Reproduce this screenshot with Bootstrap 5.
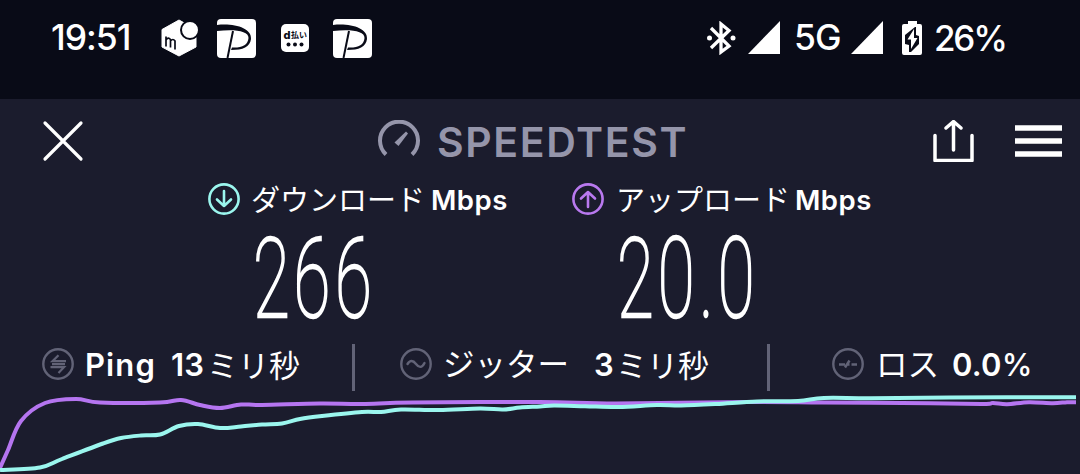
<!DOCTYPE html>
<html lang="ja">
<head>
    <meta charset="UTF-8" />
    <meta name="viewport" content="width=device-width, initial-scale=1" />
    <title>Speedtest</title>
    <link href="https://cdn.jsdelivr.net/npm/bootstrap@5.3.2/dist/css/bootstrap.min.css" rel="stylesheet" />
    <style>
        body { background: #1b1c2d; color: #fff; font-family: Inter, "Noto Sans CJK JP", sans-serif; width: 1080px; height: 474px; overflow: hidden; }
        svg { display: block; flex: none; }
        .line { display: grid; white-space: nowrap; }
        .line > * { min-width: 0; line-height: 1; }
        .status-bar { height: 99px; padding-bottom: 23px; background: #090b17; grid-template-columns: 51px 110px 56px 63px 53px 374px 41px 46px 57px 51px 32px 1fr; }
        .status-text { font-size: 35.5px; font-weight: 500; letter-spacing: -1px; }
        #charge { font-size: 35px; letter-spacing: -2.2px; }
        .top-bar { height: 84px; grid-template-columns: 42px 335px 60px 495px 82px 1fr; }
        .brand { font-size: 41px; font-weight: 600; color: #9595aa; letter-spacing: 1.6px; padding-top: 3px; }
        .label-line { height: 32px; grid-template-columns: 208px 43px 180px 141px 44px 179px 1fr; }
        .jp { font-family: "Noto Sans CJK JP", sans-serif; font-size: 29px; }
        .label-line .jp { margin-top: -2px; }
        .unit { font-size: 27.5px; font-weight: 600; letter-spacing: .5px; padding-top: 4px; }
        .speed-line { height: 116px; grid-template-columns: 253px 364px 1fr; }
        .speed { font-family: Roboto, sans-serif; font-size: 112px; font-weight: 100; fill: #fff; stroke: #fff; stroke-width: 2.4px; }
        .metric-line { height: 66px; grid-template-columns: 42px 43px 86px 36px 145px 48px 43px 151px 22px 151px 65px 44px 76px 1fr; }
        .metric-line .jp { font-size: 31.5px; margin-top: -2px; }
        .metric-line .minutes { font-size: 31px; }
        .metric { font-size: 31px; font-weight: 600; padding-top: 1px; letter-spacing: .2px; }
        .metric-name { letter-spacing: 1.1px; }
        .percent { font-weight: 500; }
        .divider { width: 3px; height: 47px; background: #626377; margin-top: 7px; }
    </style>
</head>
<body>
    <header class="line align-items-center status-bar">
        <span></span>
        <span class="status-text" id="clock">19:51</span>
        <svg width="38" height="38" viewBox="0 0 38 38">
            <path d="M18 1 35 10.500V28L18 37 1 28V10.500Z" fill="#fff" stroke="#fff" stroke-linejoin="round"/>
            <circle cx="29" cy="11" r="9" fill="#fff" stroke="#090b17" stroke-width="2"/>
            <path d="M5 27.500V17.500M5 21q2-3.500 4.500-.5v8M9.500 22q2.500-3 4.500 0v8.500" fill="none" stroke="#090b17" stroke-width="1.700"/>
        </svg>
        <svg width="39" height="39" viewBox="0 0 39 39">
            <rect width="39" height="39" rx="4" fill="#fff"/>
            <path d="M0 6C17 4 35 9 34 20 33 28 26 31 14 31l1-2.500C25 29 31 26 31.500 19 32 12 18 10 0 12Z" fill="#090b17"/>
            <path d="M16 12 10.500 39" stroke="#090b17" stroke-width="2"/>
        </svg>
        <svg width="30" height="30" viewBox="0 0 30 30">
            <rect x="1" y="1" width="28" height="28" rx="5" fill="#fff"/>
            <text x="3.500" y="15.500" font-size="11" font-weight="800" fill="#090b17">d</text>
            <text x="11" y="15" font-size="8" font-weight="700" fill="#090b17" font-family="Noto Sans CJK JP">払い</text>
            <g fill="#090b17"><circle cx="8.500" cy="21.500" r="2"/><circle cx="15" cy="21.500" r="2"/><circle cx="21.500" cy="21.500" r="2"/></g>
        </svg>
        <svg width="39" height="39" viewBox="0 0 39 39">
            <rect width="39" height="39" rx="4" fill="#fff"/>
            <path d="M0 6C17 4 35 9 34 20 33 28 26 31 14 31l1-2.500C25 29 31 26 31.500 19 32 12 18 10 0 12Z" fill="#090b17"/>
            <path d="M16 12 10.500 39" stroke="#090b17" stroke-width="2"/>
        </svg>
        <svg width="29" height="34" viewBox="0 0 29 34">
            <path d="M4 7 22 25 14 31V3l8 6.500L4 27" fill="none" stroke="#fff" stroke-width="3.300"/>
            <circle cx="2.500" cy="17" r="2.500" fill="#fff"/><circle cx="26" cy="17" r="2.500" fill="#fff"/>
        </svg>
        <svg width="33" height="34" viewBox="0 0 33 34"><path d="M32 0v33H0Z" fill="#fff"/></svg>
        <span class="status-text">5G</span>
        <svg width="33" height="34" viewBox="0 0 33 34"><path d="M32 0v33H0Z" fill="#fff"/></svg>
        <svg width="21" height="34" viewBox="0 0 21 34">
            <path d="M6 0h9v3h3q2 0 2 2v27q0 2-2 2H2q-2 0-2-2V5q0-2 2-2h4Z" fill="#fff"/>
            <path d="M13 6 3 14v9l4 1v7h2l8-8v-8l-3-1V6Z" fill="#090b17"/>
            <path d="M12 8 5.500 18.500H9V28l6.500-11H12Z" fill="#fff"/>
        </svg>
        <span class="status-text" id="charge">26%</span>
    </header>

    <nav class="line align-items-center top-bar">
        <span></span>
        <svg width="42" height="42" viewBox="0 0 42 42"><path d="m3 3 36 36M39 3 3 39" stroke="#fff" stroke-width="3.200" stroke-linecap="round"/></svg>
        <svg width="43" height="43" viewBox="0 0 43 43">
            <path d="M9 34.500A19 19 0 1 1 35 34.500" fill="none" stroke="#9595aa" stroke-width="4"/>
            <path d="m17.500 22.500 11.500-11 2 2-9.500 12.500Z" fill="#9595aa"/>
        </svg>
        <span class="brand">SPEEDTEST</span>
        <svg width="42" height="42" viewBox="0 0 42 42">
            <path d="M3 15.500v25h37v-25M21.500 30V2M14 8l7.500-6.500L29 8" fill="none" stroke="#fff" stroke-width="3.500" stroke-linecap="round" stroke-linejoin="round"/>
        </svg>
        <svg width="48" height="34" viewBox="0 0 48 34"><path d="M1 4h47M1 17h47M1 30h47" stroke="#fff" stroke-width="5.500"/></svg>
    </nav>

    <main>
        <div class="line align-items-center label-line">
            <span></span>
            <svg width="32" height="32" viewBox="0 0 32 32" fill="none" stroke="#9bf6ee" stroke-width="2.600"><circle cx="16" cy="16" r="14.600"/><path d="M16 8v15M9 16.500l7 6.500 7-6.500" stroke-linecap="round" stroke-linejoin="round"/></svg>
            <span class="jp">ダウンロード</span>
            <span class="unit">Mbps</span>
            <svg width="32" height="32" viewBox="0 0 32 32" fill="none" stroke="#b979ef" stroke-width="2.600"><circle cx="16" cy="16" r="14.600"/><path d="M16 24V9M9 15.500 16 9l7 6.500" stroke-linecap="round" stroke-linejoin="round"/></svg>
            <span class="jp">アップロード</span>
            <span class="unit">Mbps</span>
        </div>
        <!-- tall condensed digits: Roboto Thin narrowed -->
        <div class="line speed-line">
            <span></span>
            <svg width="140" height="116" viewBox="0 0 140 116" overflow="visible"><text class="speed" transform="scale(.6 1)" x="0 67.500 136.500" y="101.500">266</text></svg>
            <svg width="150" height="116" viewBox="0 0 150 116" overflow="visible"><text class="speed" transform="scale(.6 1)" x="0 68 137 168" y="101.500">20.0</text></svg>
        </div>
        <div class="line align-items-center metric-line">
            <span></span>
            <svg width="32" height="32" viewBox="0 0 32 32" fill="none" stroke="#626377" stroke-width="2.400"><circle cx="16" cy="16" r="14.700"/><path d="M24 13.200H10.500l6-6M8.500 19.200H22L16.500 25M10 16.200h13" stroke-width="2.200"/></svg>
            <span class="metric metric-name">Ping</span>
            <span class="metric">13</span>
            <span class="jp minutes">ミリ秒</span>
            <span class="divider"></span>
            <svg width="32" height="32" viewBox="0 0 32 32" fill="none" stroke="#626377" stroke-width="2.400"><circle cx="16" cy="16" r="14.700"/><path d="M7.500 16c2.500-4 5.500-4 8.500 0s6 4 8.500-1" stroke-linecap="round"/></svg>
            <span class="jp">ジッター</span>
            <span class="metric">3</span>
            <span class="jp minutes">ミリ秒</span>
            <span class="divider"></span>
            <svg width="32" height="32" viewBox="0 0 32 32" fill="none" stroke="#626377" stroke-width="2.400"><circle cx="16" cy="16" r="14.700"/><path d="M7 16.500h6M13 19.500l4.500-7M15 16.500h2.500M19.500 16.500H25"/></svg>
            <span class="jp">ロス</span>
            <span class="metric">0.0<span class="percent">%</span></span>
        </div>
    </main>
    <svg id="chart" width="1080" height="77" viewBox="0 397 1080 77" overflow="visible" fill="none" stroke-width="4">
        <path id="upload" stroke="#b575f0"/>
        <path id="download" stroke="#9bf6ee"/>
    </svg>

    <script>
        const upload = [[0,468],[8,450],[21,421],[45,403],[76,399],[100,402.500],[160,402.500],[181,400],[200,405],[220,408],[241,404.500],[262,405],[320,403.500],[362,404],[413,402.500],[540,402],[616,403.500],[747,402],[822,402.500],[902,403],[981,404],[993,403],[1007,404.200],[1029,402.200],[1053,403.200],[1067,402.200],[1076,402.200]];
        const download = [[0,470],[40,467.500],[62,459],[103,443.500],[121,438],[141,435.500],[160,434.500],[179,426],[198,424],[220,428],[241,426.500],[262,424.500],[282,423.500],[300,419],[322,416],[362,412],[381,412],[401,409.500],[439,410],[480,408.500],[503,409.500],[520,407.500],[540,406.500],[554,405.500],[585,406.200],[619,407],[657,405],[681,405.500],[716,404],[757,401.500],[798,401],[824,398],[871,398.200],[950,397.500],[1076,397.200]];

        // smooth curve through every sample
        function curve(points) {
            let d = 'M' + points[0];
            for (let i = 0; i < points.length - 1; i++) {
                const a = points[i - 1] || points[i], b = points[i], c = points[i + 1], e = points[i + 2] || c;
                d += `C${b[0] + (c[0] - a[0]) / 6},${b[1] + (c[1] - a[1]) / 6} ${c[0] - (e[0] - b[0]) / 6},${c[1] - (e[1] - b[1]) / 6} ${c}`;
            }
            return d;
        }

        document.getElementById('upload').setAttribute('d', curve(upload));
        document.getElementById('download').setAttribute('d', curve(download));
    </script>
    <script src="https://cdn.jsdelivr.net/npm/bootstrap@5.3.2/dist/js/bootstrap.bundle.min.js"></script>
</body>
</html>
